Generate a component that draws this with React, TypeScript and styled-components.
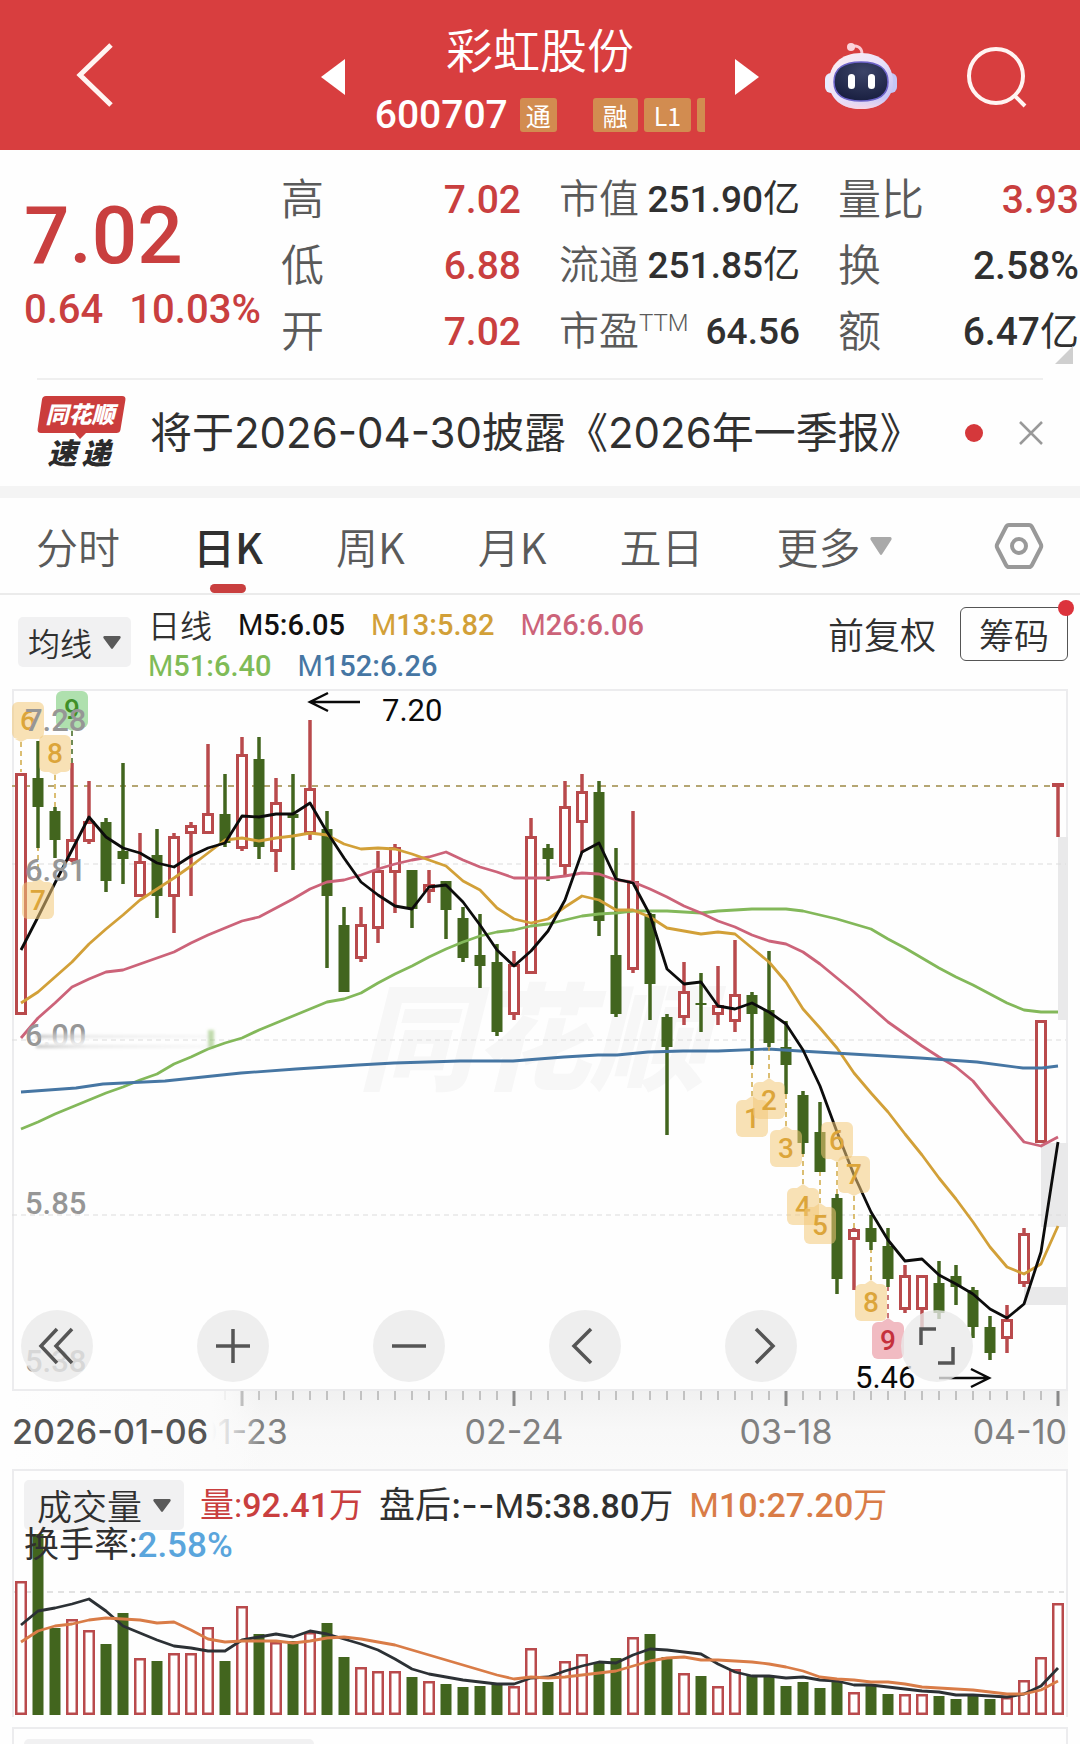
import React from 'react';
import styled, { createGlobalStyle } from 'styled-components';

const CJK = '"Noto Sans CJK SC", "Noto Sans", sans-serif';
const NUM = 'Roboto, "Noto Sans CJK SC", sans-serif';
const WIDE = 'Inter, "Noto Sans CJK SC", sans-serif';
const RED = '#c93f3f';
const UP = '#b94a4c';
const DOWN = '#42651e';
const INK = '#303030';

/* ---------- market data, in plot units ---------- */

type Candle = ['r' | 'g', number, number, number, number];

// direction, high, body top, body bottom, low
const candles: Candle[] = [
  ['r', 83, 83, 325, 325], ['g', 51, 88, 117, 158], ['g', 117, 121, 150, 168], ['r', 73, 149, 171, 172],
  ['r', 91, 131, 152, 154], ['g', 128, 132, 191, 202], ['g', 73, 161, 169, 194], ['r', 143, 171, 207, 207],
  ['g', 139, 165, 206, 228], ['r', 143, 146, 207, 243], ['r', 132, 135, 144, 206], ['r', 54, 123, 144, 144],
  ['g', 84, 124, 153, 157], ['r', 47, 64, 159, 161], ['g', 47, 69, 157, 169], ['r', 88, 112, 162, 182],
  ['g', 84, 124, 128, 180], ['r', 30, 98, 144, 150], ['g', 121, 139, 206, 278], ['g', 217, 235, 302, 302],
  ['r', 217, 234, 269, 272], ['r', 161, 180, 239, 253], ['r', 154, 157, 183, 223], ['g', 180, 180, 219, 238],
  ['r', 180, 194, 202, 213], ['g', 191, 191, 220, 249], ['g', 217, 228, 268, 272], ['g', 224, 265, 276, 298],
  ['g', 254, 272, 342, 346], ['r', 261, 274, 325, 330], ['r', 128, 146, 284, 284], ['g', 154, 158, 169, 191],
  ['r', 91, 116, 177, 185], ['r', 84, 101, 133, 163], ['g', 91, 102, 231, 246], ['g', 158, 265, 324, 327],
  ['r', 121, 191, 280, 283], ['g', 223, 224, 294, 330], ['g', 324, 327, 357, 445], ['r', 272, 301, 328, 335],
  ['g', 283, 313, 315, 342], ['r', 276, 315, 325, 335], ['r', 250, 304, 332, 342], ['g', 302, 305, 324, 375],
  ['g', 261, 320, 353, 357], ['g', 331, 357, 375, 404], ['g', 401, 405, 453, 464], ['g', 412, 442, 482, 482],
  ['g', 504, 508, 589, 604], ['r', 538, 539, 550, 600], ['g', 525, 538, 552, 560], ['g', 538, 556, 589, 597],
  ['r', 575, 585, 620, 623], ['r', 585, 585, 620, 640], ['g', 571, 593, 623, 629], ['g', 575, 586, 597, 615],
  ['g', 597, 600, 637, 648], ['g', 626, 637, 663, 670], ['r', 615, 629, 649, 663], ['r', 538, 543, 594, 597],
  ['r', 330, 330, 453, 453], ['r', 93, 93, 96, 147],
];

const ma5 = [260, 227, 193, 160, 127, 147, 158, 163, 173, 177, 166, 158, 153, 126, 127, 124, 124, 113, 142, 168, 192, 205, 216, 219, 197, 195, 212, 235, 260, 276, 261, 241, 210, 162, 153, 189, 193, 225, 279, 294, 292, 316, 319, 313, 322, 334, 360, 396, 442, 485, 522, 550, 571, 569, 585, 594, 604, 619, 628, 614, 562, 452];
const ma13 = [313, 302, 287, 272, 254, 239, 225, 210, 199, 188, 176, 163, 150, 148, 151, 148, 146, 143, 145, 154, 159, 158, 159, 164, 170, 176, 191, 200, 218, 229, 233, 229, 217, 206, 210, 220, 220, 227, 238, 241, 244, 242, 244, 258, 272, 292, 319, 338, 358, 383, 403, 422, 444, 465, 488, 509, 532, 557, 577, 584, 574, 536];
const ma26 = [348, 328, 313, 297, 289, 282, 280, 274, 268, 262, 253, 245, 238, 231, 227, 218, 209, 199, 192, 190, 185, 179, 174, 170, 167, 162, 170, 177, 182, 188, 188, 188, 186, 183, 184, 190, 192, 199, 207, 216, 223, 231, 237, 245, 251, 254, 262, 274, 288, 302, 317, 332, 344, 356, 367, 377, 391, 412, 432, 452, 456, 447];
const ma51 = [439, 432, 424, 417, 410, 403, 397, 390, 384, 374, 367, 359, 353, 348, 340, 333, 326, 319, 312, 309, 303, 293, 284, 276, 267, 259, 252, 246, 242, 240, 236, 234, 230, 226, 224, 223, 221, 221, 221, 222, 223, 221, 220, 219, 219, 219, 221, 225, 229, 234, 239, 249, 258, 268, 278, 287, 295, 304, 313, 320, 322, 322];
const ma152: [number, number][] = [[21, 402], [76, 398], [103, 394], [165, 391], [241, 383], [296, 379], [358, 375], [394, 373], [460, 371], [513, 371], [564, 367], [598, 365], [617, 365], [648, 362], [683, 361], [718, 361], [768, 359], [800, 361], [920, 368], [977, 372], [1023, 378], [1042, 378], [1058, 376]];

const volumeTops = [111, 64, 158, 149, 160, 174, 143, 188, 191, 183, 183, 157, 191, 136, 164, 172, 171, 162, 153, 187, 197, 201, 201, 207, 211, 214, 217, 216, 214, 216, 178, 212, 191, 184, 193, 188, 167, 164, 187, 203, 206, 216, 199, 205, 207, 216, 212, 218, 211, 222, 215, 224, 224, 224, 226, 229, 226, 229, 227, 210, 187, 133];
const volumeMa5 = [155, 141, 138, 134, 129, 141, 156, 163, 170, 176, 178, 181, 181, 170, 167, 164, 167, 161, 164, 169, 174, 180, 189, 199, 204, 207, 210, 212, 214, 214, 208, 207, 201, 196, 192, 193, 185, 179, 180, 182, 184, 194, 202, 206, 206, 208, 207, 210, 211, 215, 215, 217, 219, 221, 222, 225, 225, 226, 227, 224, 216, 198];
const volumeMa10 = [172, 161, 156, 154, 150, 148, 149, 150, 153, 152, 160, 169, 172, 171, 171, 171, 173, 171, 168, 167, 169, 172, 175, 180, 185, 190, 195, 200, 205, 209, 207, 208, 207, 205, 203, 201, 196, 191, 188, 187, 190, 190, 191, 192, 194, 197, 201, 207, 209, 210, 212, 212, 214, 217, 218, 219, 220, 222, 224, 224, 220, 211];

interface Signal {
  n: number;
  x: number;
  y: number;
  stem: number;
  tipX?: number;
  down?: boolean;
  tone?: 'gold' | 'green' | 'red';
}

const signals: Signal[] = [
  { n: 6, x: 28, tipX: 21, y: 12, stem: 82, down: true },
  { n: 7, x: 38, y: 192, stem: 158 },
  { n: 8, x: 55, y: 45, stem: 117, down: true },
  { n: 9, x: 72, y: 1, stem: 73, down: true, tone: 'green' },
  { n: 1, x: 752, y: 410, stem: 375 },
  { n: 2, x: 769, y: 392, stem: 357 },
  { n: 3, x: 786, y: 440, stem: 404 },
  { n: 4, x: 803, y: 498, stem: 464 },
  { n: 5, x: 820, y: 517, stem: 482 },
  { n: 6, x: 837, y: 432, stem: 504, down: true },
  { n: 7, x: 854, y: 466, stem: 538, down: true },
  { n: 8, x: 871, y: 594, stem: 560 },
  { n: 9, x: 888, y: 632, stem: 597, tone: 'red' },
];

const tones = {
  gold: { box: '#f3c878', text: '#dca53a', line: '#cfa945' },
  green: { box: '#6dc66b', text: '#3f8f27', line: '#42651e' },
  red: { box: '#e58490', text: '#c5303c', line: '#b94a4c' },
};

const cx = (i: number) => 21 + 17 * i;
const series = (ys: number[]) => ys.map((y, i) => `${cx(i)},${y}`).join(' ');

/* ---------- styles ---------- */

const GlobalStyle = createGlobalStyle`
  * { box-sizing: border-box; }
  body { margin: 0; background: #fefefe; font-family: ${CJK}; color: ${INK}; }
  button, select { font: inherit; color: inherit; background: none; border: 0; padding: 0; margin: 0; cursor: pointer; }
  svg { display: block; overflow: visible; }
`;

const Page = styled.main`
  overflow: hidden;
`;

const Header = styled.header`
  display: grid;
  grid-template-columns: 1fr 24px 390px 24px 1fr;
  align-items: center;
  height: 150px;
  padding-top: 4px;
  background: #d83e3f;
  color: #fff;
`;

const HeaderSide = styled.div<{ $end?: boolean }>`
  display: flex;
  align-items: center;
  justify-content: ${p => (p.$end ? 'flex-end' : 'flex-start')};
  gap: 68px;
  padding: ${p => (p.$end ? '0 52px 0 0' : '0 0 0 74px')};
`;

const IconButton = styled.button`
  display: flex;
  align-items: center;
  justify-content: center;
  flex: none;
`;

const Title = styled.div`
  display: flex;
  flex-direction: column;
  align-items: center;
`;

const StockName = styled.h1`
  margin: 0;
  font-size: 47px;
  line-height: 64px;
  font-weight: 350;
`;

const CodeRow = styled.div`
  display: flex;
  align-items: center;
  gap: 6px;
  height: 58px;
  padding-top: 12px;
`;

const Code = styled.span`
  margin-right: 6px;
  font: 500 39px/46px ${NUM};
`;

const Tag = styled.span<{ $wide?: boolean; $gap?: boolean; $cut?: boolean }>`
  display: flex;
  align-items: center;
  justify-content: center;
  height: 34px;
  width: ${p => (p.$cut ? '8px' : 'auto')};
  padding: ${p => (p.$cut ? '0' : p.$wide ? '0 10px' : '0 6px')};
  margin-left: ${p => (p.$gap ? '30px' : '0')};
  border-radius: ${p => (p.$cut ? '3px 0 0 3px' : '3px')};
  background: #d28c50;
  font-size: 25px;
  line-height: 34px;
`;

const Quote = styled.section`
  position: relative;
  display: grid;
  grid-template-columns: 219px 240px 241px 1fr;
  column-gap: 38px;
  padding: 15px 1px 15px 24px;
`;

const PriceBlock = styled.div`
  display: flex;
  flex-direction: column;
  justify-content: center;
  padding-top: 4px;
  color: ${RED};
  white-space: nowrap;
`;

const Price = styled.strong`
  font: 500 80px/88px ${NUM};
`;

const Change = styled.div`
  display: flex;
  gap: 26px;
  font: 500 40px/60px ${NUM};
`;

const Stats = styled.dl`
  margin: 0;
  display: flex;
  flex-direction: column;
`;

const Stat = styled.div`
  display: flex;
  align-items: center;
  justify-content: space-between;
  height: 66px;
  white-space: nowrap;
`;

const StatName = styled.dt<{ $small?: boolean }>`
  padding-bottom: 4px;
  font-size: ${p => (p.$small ? '40px' : '43px')};
  line-height: 60px;
  font-weight: 350;
  color: #5a5a5a;
`;

const Sup = styled.sup`
  font: 300 24px/22px ${NUM};
  vertical-align: 14px;
`;

const StatValue = styled.dd<{ $red?: boolean; $small?: boolean }>`
  margin: 0;
  padding-top: 4px;
  font: 500 ${p => (p.$small ? '37px' : '39px')}/60px ${NUM};
  color: ${p => (p.$red ? RED : INK)};
`;

const Unit = styled.span`
  font-weight: 400;
`;

const Corner = styled.svg`
  position: absolute;
  right: 7px;
  bottom: 14px;
`;

const News = styled.section`
  display: flex;
  align-items: center;
  height: 108px;
  margin: 0 37px;
  border-top: 2px solid #efefef;
`;

const Headline = styled.a`
  flex: 1;
  margin-left: 23px;
  font: 400 42px/60px ${WIDE};
  color: ${INK};
  text-decoration: none;
  white-space: nowrap;
`;

const Dot = styled.span`
  flex: none;
  width: 18px;
  height: 18px;
  margin-right: 36px;
  border-radius: 50%;
  background: #d5383b;
`;

const Band = styled.div`
  height: 12px;
  background: #f4f4f4;
`;

const Tabs = styled.nav`
  display: flex;
  align-items: center;
  gap: 73px;
  height: 97px;
  padding: 0 36px;
  border-bottom: 2px solid #ebebeb;
`;

const Tab = styled.button<{ $active?: boolean }>`
  position: relative;
  height: 95px;
  font-size: 42px;
  line-height: 95px;
  font-weight: ${p => (p.$active ? 500 : 350)};
  color: ${p => (p.$active ? INK : '#5a5a5a')};
  &::after {
    content: '';
    display: ${p => (p.$active ? 'block' : 'none')};
    position: absolute;
    left: 50%;
    bottom: 0;
    width: 36px;
    height: 9px;
    margin-left: -18px;
    border-radius: 5px;
    background: ${RED};
  }
`;

const SettingsButton = styled(IconButton)`
  margin-left: auto;
`;

const Pick = styled.label<{ $kind: 'tab' | 'small' | 'large' }>`
  display: flex;
  align-items: center;
  flex: none;
  gap: ${p => (p.$kind === 'tab' ? '8px' : '10px')};
  height: ${p => (p.$kind === 'tab' ? '95px' : '50px')};
  padding: ${p => (p.$kind === 'tab' ? '0' : p.$kind === 'small' ? '0 10px' : '0 13px')};
  border-radius: 5px;
  background: ${p => (p.$kind === 'tab' ? 'none' : '#f1f1f2')};
  color: ${p => (p.$kind === 'tab' ? '#5a5a5a' : INK)};
  font-size: ${p => (p.$kind === 'tab' ? '42px' : p.$kind === 'small' ? '32px' : '35px')};
  font-weight: 350;
  line-height: 50px;
`;

const PickSelect = styled.select`
  appearance: none;
  outline: none;
`;

const Averages = styled.section`
  display: flex;
  align-items: flex-start;
  height: 94px;
  padding: 10px 12px 10px 18px;
`;

const PickSlot = styled.div`
  align-self: center;
`;

const Legend = styled.div`
  flex: 1;
  margin-left: 17px;
`;

const LegendRow = styled.div`
  display: flex;
  align-items: center;
  gap: 26px;
  height: 41px;
`;

const LegendName = styled.span`
  padding-bottom: 4px;
  font-size: 32px;
  line-height: 40px;
  font-weight: 350;
`;

const LegendItem = styled.span<{ $color: string }>`
  font: 500 29px/41px ${NUM};
  color: ${p => p.$color};
`;

const Thin = styled.span`
  font-weight: 400;
`;

const Adjust = styled.button`
  margin-right: 24px;
  font-size: 36px;
  line-height: 56px;
  font-weight: 350;
`;

const Chips = styled.button`
  position: relative;
  width: 108px;
  height: 54px;
  margin-top: 2px;
  border: 1px solid #555;
  border-radius: 6px;
  font-size: 35px;
  line-height: 50px;
  font-weight: 350;
  &::after {
    content: '';
    position: absolute;
    top: -8px;
    right: -7px;
    width: 16px;
    height: 16px;
    border-radius: 50%;
    background: #dc333c;
  }
`;

const Frame = styled.section<{ $open?: boolean }>`
  position: relative;
  margin: 0 12px;
  border: 2px solid #ececee;
  border-bottom-width: ${p => (p.$open ? '0' : '2px')};
`;

const Plot = styled.svg`
  width: 100%;
  height: auto;
`;

const Controls = styled.div`
  position: absolute;
  left: 7px;
  right: 93px;
  bottom: 7px;
  display: flex;
  justify-content: space-between;
`;

const RoundButton = styled.button`
  display: flex;
  align-items: center;
  justify-content: center;
  width: 72px;
  height: 72px;
  border-radius: 50%;
  background: rgba(233, 233, 233, 0.78);
`;

const Axis = styled.svg`
  width: 100%;
  height: auto;
`;

const VolumeHead = styled.div`
  position: absolute;
  left: 10px;
  top: 9px;
  white-space: nowrap;
`;

const VolumeRow = styled.div`
  display: flex;
  align-items: center;
  gap: 16px;
  height: 50px;
`;

const VolumeItem = styled.span<{ $color: string }>`
  font: 400 34px/50px ${NUM};
  color: ${p => p.$color};
`;

const Bold = styled.span`
  font-weight: 500;
`;

const AfterHours = styled.span`
  font: 400 36px/50px ${WIDE};
`;

const Turnover = styled.div`
  font: 400 35px/32px ${NUM};
`;

const TurnoverRate = styled.span`
  font-weight: 500;
  color: #5aa5dc;
`;

const NextFrame = styled(Frame)`
  height: 40px;
  margin-top: 10px;
  padding: 10px;
`;

const NextPick = styled.div`
  width: 290px;
  height: 50px;
  border-radius: 5px;
  background: #f1f1f2;
`;

/* ---------- pieces ---------- */

const Triangle = ({ w, h, color }: { w: number; h: number; color: string }) => (
  <svg width={w} height={h} viewBox="0 0 18 12" preserveAspectRatio="none" aria-hidden="true">
    <path d="M1.5 0h15a1.2 1.2 0 0 1 .9 2L10 11.4a1.3 1.3 0 0 1-2 0L.6 2a1.2 1.2 0 0 1 .9-2z" fill={color} />
  </svg>
);

const PickList = ({ name, value, kind }: { name: string; value: string; kind: 'tab' | 'small' | 'large' }) => (
  <Pick $kind={kind}>
    <PickSelect aria-label={name} defaultValue={value}>
      <option>{value}</option>
    </PickSelect>
    {kind === 'tab' ? <Triangle w={22} h={18} color="#a9a9a9" /> : <Triangle w={18} h={13} color="#5a5a5a" />}
  </Pick>
);

const Robot = () => (
  <svg width="74" height="70" viewBox="0 0 74 70" aria-hidden="true">
    <defs>
      <linearGradient id="shell" x1="0" y1="0" x2="1" y2="1">
        <stop offset="0" stopColor="#ffeef0" />
        <stop offset=".5" stopColor="#e9e2fa" />
        <stop offset="1" stopColor="#b9b8f2" />
      </linearGradient>
      <linearGradient id="rim" x1="0" y1="0" x2="0" y2="1">
        <stop offset="0" stopColor="#fff" stopOpacity="0" />
        <stop offset=".8" stopColor="#e6dcf8" stopOpacity="0" />
        <stop offset="1" stopColor="#fbd5e2" />
      </linearGradient>
      <radialGradient id="visor" cx=".55" cy=".25" r=".8">
        <stop offset="0" stopColor="#3c4468" />
        <stop offset="1" stopColor="#171d3e" />
      </radialGradient>
    </defs>
    <path d="M27 5c4-2 11-1 11 7" fill="none" stroke="#fbc9d2" strokeWidth="3" />
    <circle cx="27" cy="5" r="4" fill="#fbd3da" />
    <rect x="1" y="31" width="12" height="20" rx="6" fill="#e8ecff" />
    <rect x="61" y="31" width="12" height="20" rx="6" fill="#c4c6f6" />
    <path d="M37 11c20 0 32 12 32 29S56 67 37 67 5 57 5 40s12-29 32-29z" fill="url(#shell)" />
    <path d="M37 11c20 0 32 12 32 29S56 67 37 67 5 57 5 40s12-29 32-29z" fill="url(#rim)" />
    <path d="M37 20C55 20 64 27 64 40S55 59 37 59 10 53 10 40 19 20 37 20z" fill="url(#visor)" stroke="#6d63c9" strokeWidth="1.5" />
    <rect x="24" y="32" width="7" height="15" rx="3.500" fill="#fff" />
    <rect x="44" y="32" width="7" height="15" rx="3.500" fill="#fff" />
  </svg>
);

const ExpressLogo = () => (
  <svg width="90" height="74" viewBox="0 0 90 74" role="img" aria-label="同花顺速递">
    <path d="M9 0h76q4 0 3.400 4l-5 30q-.5 3-4 3H49l-6 6-5-6H4q-4 0-3.400-4L5 3.500Q5.500 0 9 0z" fill="#cb3d3c" />
    <g fontFamily={CJK} fontWeight="900" fontStyle="italic" textAnchor="middle">
      <text x="43" y="27" fontSize="23" fill="#fff">同花顺</text>
      <text x="25" y="68" fontSize="29" fill="#2b2b2b">速</text>
      <text x="59" y="68" fontSize="29" fill="#2b2b2b">递</text>
    </g>
  </svg>
);

const SignalTag = ({ n, x, y, stem, tipX = x, down, tone = 'gold' }: Signal) => {
  const c = tones[tone];
  const tip = down ? y + 40 : y - 4;
  const edge = down ? y + 37 : y;
  return (
    <g>
      <line x1={tipX} x2={tipX} y1={tip} y2={stem} stroke={c.line} strokeWidth="1.5" strokeDasharray="5 4" />
      <rect x={x - 16} y={y} width="32" height="37" rx="6" fill={c.box} opacity=".55" />
      <path d={`M${tipX - 6} ${edge}L${tipX} ${tip}L${tipX + 6} ${edge}z`} fill={c.box} opacity=".55" />
      <text x={x} y={y + 28} textAnchor="middle" fontSize="28" fontWeight="500" fill={c.text}>{n}</text>
    </g>
  );
};

const Bar = ({ up, i, top, bottom, line }: { up: boolean; i: number; top: number; bottom: number; line: number }) =>
  up ? (
    <rect x={cx(i) - 6 + line / 2} y={top + line / 2} width={12 - line} height={Math.max(bottom - top - line, 1)} fill="#fff" stroke={UP} strokeWidth={line} />
  ) : (
    <rect x={cx(i) - 5.500} y={top} width="11" height={Math.max(bottom - top, 2)} fill={DOWN} />
  );

const PriceChart = () => (
  <Plot viewBox="14 1 1052 698" fontFamily={NUM} role="img" aria-label="日K线图">
    <defs>
      <linearGradient id="smear" x1="0" y1="0" x2="0" y2="1">
        <stop offset="0" stopColor="#fefefe" stopOpacity="0" />
        <stop offset=".75" stopColor="#fefefe" stopOpacity=".95" />
        <stop offset="1" stopColor="#fefefe" />
      </linearGradient>
      <linearGradient id="streak" x1="0" y1="0" x2="1" y2="0">
        <stop offset="0" stopColor="#a8a8a8" stopOpacity=".7" />
        <stop offset=".3" stopColor="#d4d4d4" stopOpacity=".5" />
        <stop offset="1" stopColor="#ededed" stopOpacity=".4" />
      </linearGradient>
      <filter id="soft" x="-10%" y="-300%" width="120%" height="700%">
        <feGaussianBlur stdDeviation="1.600" />
      </filter>
    </defs>
    <text x="358" y="391" fontFamily={CJK} fontSize="116" fontWeight="900" fontStyle="italic" fill="#f7f7f7">同花顺</text>
    <g fill="#e9e9ea">
      <rect x="1058" y="147" width="10" height="183" />
      <rect x="1041" y="453" width="27" height="84" />
      <rect x="1024" y="597" width="44" height="18" />
    </g>
    {[174, 350, 525].map(y => (
      <line key={y} x1="12" x2="1066" y1={y} y2={y} stroke="#dcdcdc" strokeWidth="1" strokeDasharray="5 4" />
    ))}
    <line x1="12" x2="1052" y1="96" y2="96" stroke="#b5a673" strokeWidth="2" strokeDasharray="6 6" />
    {candles.map(([dir, high, top, bottom, low], i) => {
      const up = dir === 'r';
      const color = up ? UP : DOWN;
      return (
        <g key={i}>
          {high < top && <line x1={cx(i)} x2={cx(i)} y1={high} y2={top} stroke={color} strokeWidth="3.500" />}
          {low > bottom && <line x1={cx(i)} x2={cx(i)} y1={bottom} y2={low} stroke={color} strokeWidth="3.500" />}
          <Bar up={up} i={i} top={top} bottom={bottom} line={3} />
        </g>
      );
    })}
    <g fill="none" strokeWidth="2.800" strokeLinejoin="round">
      <polyline points={series(ma51)} stroke="#83b85a" />
      <polyline points={series(ma26)} stroke="#cc6379" />
      <polyline points={series(ma13)} stroke="#d2a038" />
      <polyline points={ma152.map(p => p.join(',')).join(' ')} stroke="#4676a3" />
      <polyline points={series(ma5)} stroke="#0c0c0c" />
    </g>
    {signals.map((s, i) => <SignalTag key={i} {...s} />)}
    <g fontSize="31" fontWeight="500" fill="#969696">
      <text x="25" y="41">7.28</text>
      <text x="25" y="191">6.81</text>
      <text x="25" y="356">6.00</text>
      <text x="25" y="524">5.85</text>
      <text x="25" y="682">5.38</text>
    </g>
    <rect x="41" y="340" width="50" height="20" fill="url(#smear)" />
    <g filter="url(#soft)">
      <rect x="36" y="345" width="176" height="3" fill="url(#streak)" />
      <rect x="36" y="355" width="176" height="3" fill="url(#streak)" />
      <rect x="208" y="340" width="6" height="18" fill="#83b85a" opacity=".5" />
    </g>
    <g fontSize="31" fill="#0a0a0a">
      <text x="382" y="31">7.20</text>
      <text x="855" y="698">5.46</text>
    </g>
    <g fill="none" stroke="#0a0a0a" strokeWidth="2.500">
      <path d="M360 12H310M328 3L310 12L328 21" />
      <path d="M939 688H989M971 679L989 688L971 697" />
    </g>
  </Plot>
);

const DateAxis = () => (
  <Axis viewBox="0 0 1080 78" fontFamily={WIDE} role="img" aria-label="日期">
    <defs>
      <linearGradient id="axisShade" x1="0" y1="0" x2="0" y2="1">
        <stop offset="0" stopColor="#f1f1f1" />
        <stop offset=".5" stopColor="#f8f8f8" />
        <stop offset="1" stopColor="#fafafa" />
      </linearGradient>
      <linearGradient id="axisFade" x1="0" y1="0" x2="1" y2="0">
        <stop offset="0" stopColor="#fefefe" />
        <stop offset=".8" stopColor="#fbfbfb" />
        <stop offset=".88" stopColor="#fbfbfb" stopOpacity=".7" />
        <stop offset="1" stopColor="#fbfbfb" stopOpacity="0" />
      </linearGradient>
    </defs>
    <rect x="12" width="1056" height="78" fill="url(#axisShade)" />
    {candles.map((_, i) => {
      if (i < 12) return null;
      const major = i % 16 === 13;
      return <rect key={i} x={cx(i) - (major ? 1.500 : 1)} y="0" width={major ? 3 : 2} height={major ? 15 : 9} fill={major ? '#8a8a8a' : '#c2c2c2'} />;
    })}
    <g fontSize="34" fill="#808080">
      <text x="242" y="53" textAnchor="middle">01-23</text>
      <text x="514" y="53" textAnchor="middle">02-24</text>
      <text x="786" y="53" textAnchor="middle">03-18</text>
      <text x="1067" y="53" textAnchor="end">04-10</text>
    </g>
    <rect x="12" y="0" width="250" height="78" fill="url(#axisFade)" />
    <text x="12" y="53" fontSize="34" fontWeight="500" fill="#555">2026-01-06</text>
  </Axis>
);

const VolumeChart = () => (
  <Plot viewBox="14 1 1052 246" role="img" aria-label="成交量图">
    <line x1="14" x2="1064" y1="122" y2="122" stroke="#e2e2e2" strokeWidth="2" strokeDasharray="6 5" />
    {volumeTops.map((top, i) => <Bar key={i} up={candles[i][0] === 'r'} i={i} top={top} bottom={245} line={2.5} />)}
    <g fill="none" strokeWidth="2.800" strokeLinejoin="round">
      <polyline points={series(volumeMa5)} stroke="#2c3135" />
      <polyline points={series(volumeMa10)} stroke="#d97c47" />
    </g>
  </Plot>
);

const controlIcons: [string, string][] = [
  ['最早', 'M18 1L2 18L18 35M33 1L17 18L33 35'],
  ['放大', 'M18 1V35M1 18H35'],
  ['缩小', 'M1 18H35'],
  ['左移', 'M24 1L7 18L24 35'],
  ['右移', 'M13 1L30 18L13 35'],
  ['全屏', 'M2 17V1H17M34 19V35H19'],
];

export default function App() {
  return (
    <>
      <GlobalStyle />
      <Page>
        <Header>
          <HeaderSide>
            <IconButton aria-label="返回">
              <svg width="42" height="70" viewBox="0 0 42 70"><path d="M37 3L6 33L37 63" fill="none" stroke="#fff4f2" strokeWidth="5" /></svg>
            </IconButton>
          </HeaderSide>
          <IconButton aria-label="上一只">
            <svg width="24" height="36" viewBox="0 0 24 36"><path d="M24 0V36L0 18z" fill="#fff" /></svg>
          </IconButton>
          <Title>
            <StockName>彩虹股份</StockName>
            <CodeRow>
              <Code>600707</Code>
              <Tag>通</Tag>
              <Tag $gap $wide>融</Tag>
              <Tag $wide>L1</Tag>
              <Tag $cut />
            </CodeRow>
          </Title>
          <IconButton aria-label="下一只">
            <svg width="24" height="36" viewBox="0 0 24 36"><path d="M0 0V36L24 18z" fill="#fff" /></svg>
          </IconButton>
          <HeaderSide $end>
            <IconButton aria-label="智能助手"><Robot /></IconButton>
            <IconButton aria-label="搜索">
              <svg width="62" height="62" viewBox="0 0 62 62" fill="none" stroke="#fff4f2" strokeWidth="4"><circle cx="30" cy="30" r="27" /><path d="M48 49L59 60" /></svg>
            </IconButton>
          </HeaderSide>
        </Header>

        <Quote>
          <PriceBlock>
            <Price>7.02</Price>
            <Change><span>0.64</span><span>10.03%</span></Change>
          </PriceBlock>
          <Stats>
            <Stat><StatName>高</StatName><StatValue $red>7.02</StatValue></Stat>
            <Stat><StatName>低</StatName><StatValue $red>6.88</StatValue></Stat>
            <Stat><StatName>开</StatName><StatValue $red>7.02</StatValue></Stat>
          </Stats>
          <Stats>
            <Stat><StatName $small>市值</StatName><StatValue $small>251.90<Unit>亿</Unit></StatValue></Stat>
            <Stat><StatName $small>流通</StatName><StatValue $small>251.85<Unit>亿</Unit></StatValue></Stat>
            <Stat><StatName $small>市盈<Sup>TTM</Sup></StatName><StatValue $small>64.56</StatValue></Stat>
          </Stats>
          <Stats>
            <Stat><StatName>量比</StatName><StatValue $red>3.93</StatValue></Stat>
            <Stat><StatName>换</StatName><StatValue>2.58%</StatValue></Stat>
            <Stat><StatName>额</StatName><StatValue>6.47<Unit>亿</Unit></StatValue></Stat>
          </Stats>
          <Corner width="18" height="18" viewBox="0 0 18 18" aria-hidden="true"><path d="M18 0V18H0z" fill="#cfcfcf" /></Corner>
        </Quote>

        <News>
          <ExpressLogo />
          <Headline href="#news">将于2026-04-30披露《2026年一季报》</Headline>
          <Dot />
          <IconButton aria-label="关闭">
            <svg width="24" height="24" viewBox="0 0 24 24"><path d="M1 1L23 23M23 1L1 23" stroke="#999" strokeWidth="2.500" /></svg>
          </IconButton>
        </News>
        <Band />

        <Tabs>
          <Tab>分时</Tab>
          <Tab $active>日K</Tab>
          <Tab>周K</Tab>
          <Tab>月K</Tab>
          <Tab>五日</Tab>
          <PickList name="更多周期" value="更多" kind="tab" />
          <SettingsButton aria-label="设置">
            <svg width="50" height="48" viewBox="0 0 50 48" fill="none" stroke="#999" strokeWidth="4" strokeLinejoin="round">
              <path d="M15 3H35Q37 3 38 5L46.500 21.500Q48 24 46.500 26.500L38 43Q37 45 35 45H15Q13 45 12 43L3.500 26.500Q2 24 3.500 21.500L12 5Q13 3 15 3z" />
              <circle cx="25" cy="24" r="7" />
            </svg>
          </SettingsButton>
        </Tabs>

        <Averages>
          <PickSlot><PickList name="指标" value="均线" kind="small" /></PickSlot>
          <Legend>
            <LegendRow>
              <LegendName>日线</LegendName>
              <LegendItem $color="#111"><Thin>M</Thin>5:6.05</LegendItem>
              <LegendItem $color="#d2a038"><Thin>M</Thin>13:5.82</LegendItem>
              <LegendItem $color="#cc6379"><Thin>M</Thin>26:6.06</LegendItem>
            </LegendRow>
            <LegendRow>
              <LegendItem $color="#7fbb57"><Thin>M</Thin>51:6.40</LegendItem>
              <LegendItem $color="#4676a3"><Thin>M</Thin>152:6.26</LegendItem>
            </LegendRow>
          </Legend>
          <Adjust>前复权</Adjust>
          <Chips>筹码</Chips>
        </Averages>

        <Frame>
          <PriceChart />
          <Controls>
            {controlIcons.map(([name, d]) => (
              <RoundButton key={name} aria-label={name}>
                <svg width="36" height="36" viewBox="0 0 36 36"><path d={d} fill="none" stroke="#555" strokeWidth="3.500" /></svg>
              </RoundButton>
            ))}
          </Controls>
        </Frame>
        <DateAxis />

        <Frame $open>
          <VolumeChart />
          <VolumeHead>
            <VolumeRow>
              <PickList name="副图指标" value="成交量" kind="large" />
              <VolumeItem $color={RED}>量:<Bold>92.41</Bold>万</VolumeItem>
              <VolumeItem $color={INK}><AfterHours>盘后:--</AfterHours>M<Bold>5:38.80</Bold>万</VolumeItem>
              <VolumeItem $color="#d97c47">M<Bold>10:27.20</Bold>万</VolumeItem>
            </VolumeRow>
            <Turnover>换手率:<TurnoverRate>2.58%</TurnoverRate></Turnover>
          </VolumeHead>
        </Frame>
        <NextFrame $open>
          <NextPick />
        </NextFrame>
      </Page>
    </>
  );
}
